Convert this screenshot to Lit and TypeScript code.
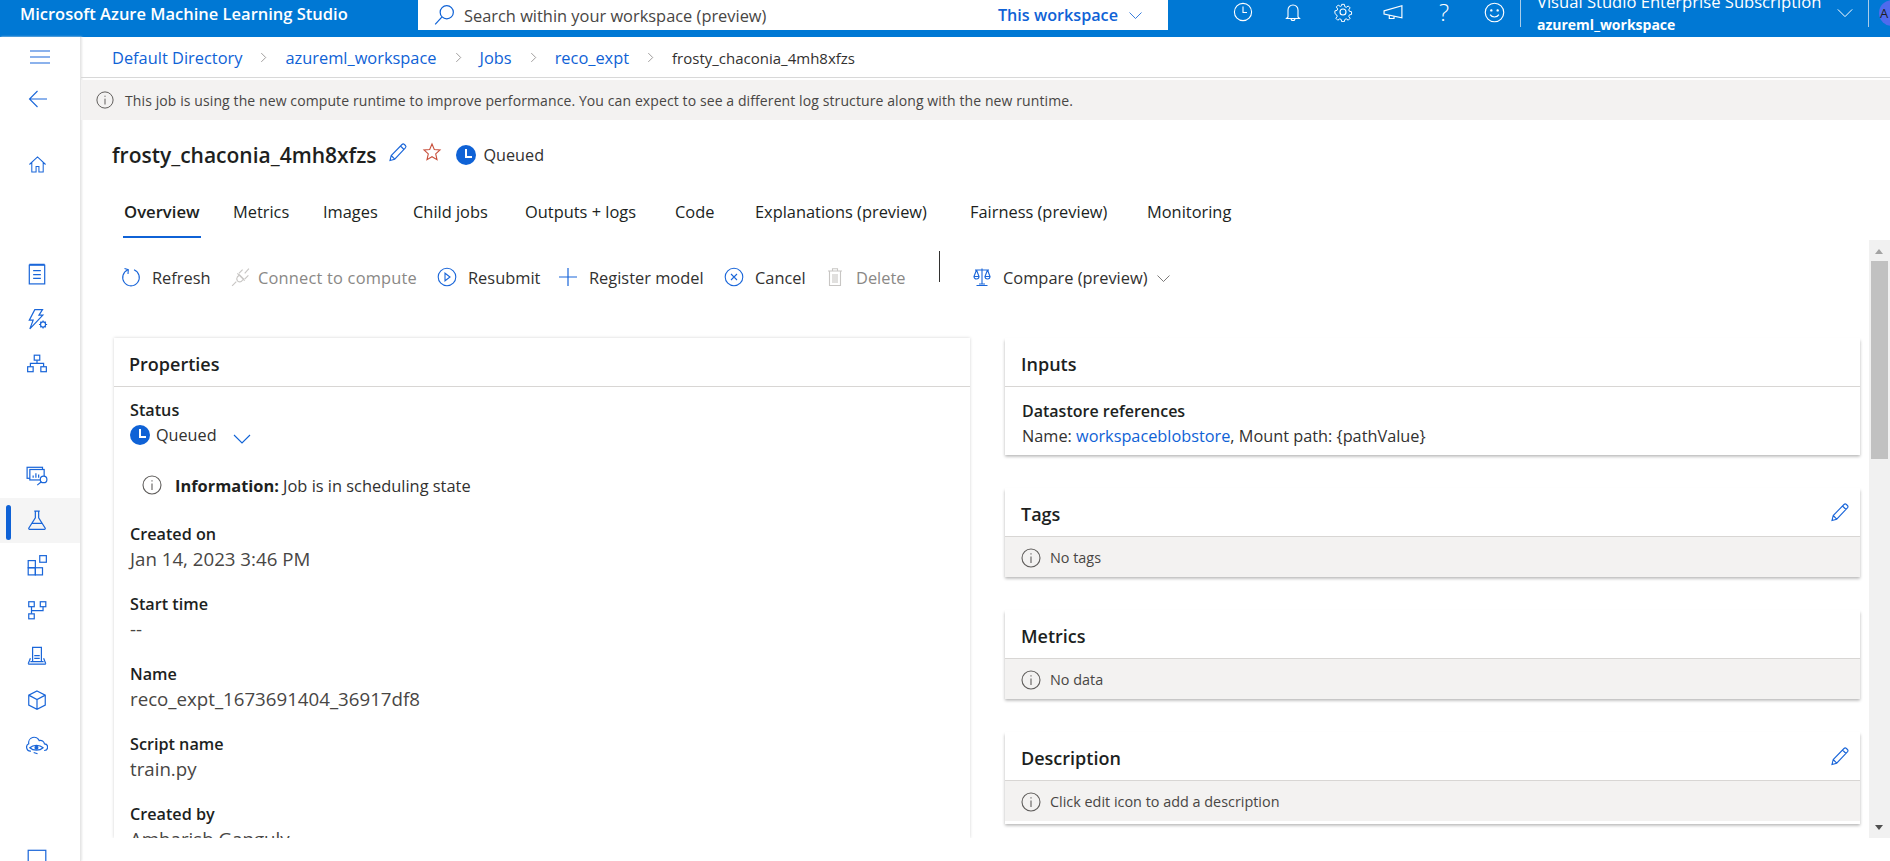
import { LitElement, html, css, svg } from "lit";
import { customElement } from "lit/decorators.js";

const ic = (w: number, body: unknown) => html`<svg class="ic" width=${w} height=${w} viewBox="0 0 20 20" fill="none" stroke="currentColor" stroke-width="1.1">${body}</svg>`;

const I = {
  search: svg`<circle cx="12.5" cy="7.5" r="6"/><path d="M8 12L2 18.5"/>`,
  clock: svg`<circle cx="10" cy="10" r="8.6"/><path d="M10 4.5V10.5H14"/>`,
  bell: svg`<path d="M5 15V8a5 5 0 0 1 10 0v7l1.5 1.5h-13z"/><path d="M8 16.5a2 2 0 0 0 4 0"/>`,
  gear: svg`<circle cx="10" cy="10" r="3"/><path d="M8.5 1.5h3l.5 2.6 1.6.7 2.2-1.5 2.1 2.1-1.5 2.2.7 1.6 2.4.5v3l-2.4.5-.7 1.6 1.5 2.2-2.1 2.1-2.2-1.5-1.6.7-.5 2.4h-3l-.5-2.4-1.6-.7-2.2 1.5-2.1-2.1 1.5-2.2-.7-1.6L1 11.7v-3l2.4-.5.7-1.6-1.5-2.2 2.1-2.1 2.2 1.5 1.6-.7z" transform="translate(1 1) scale(.9)"/>`,
  mega: svg`<path d="M1 8.5L18 3.5V15L1 11.5z"/><path d="M6 12.5v3.2h4.5v-2.2"/>`,
  smile: svg`<circle cx="10" cy="10" r="8.8"/><circle cx="7" cy="8" r=".6" fill="currentColor"/><circle cx="13" cy="8" r=".6" fill="currentColor"/><path d="M5.8 12a5 5 0 0 0 8.4 0"/>`,
  down: svg`<path d="M2 6l8 8 8-8"/>`,
  right: svg`<path d="M6 2l8 8-8 8"/>`,
  back: svg`<path d="M19 10H1.5M9.5 2L1.5 10l8 8"/>`,
  menu: svg`<path d="M0 4h20M0 10h20M0 16h20"/>`,
  home: svg`<path d="M1.5 10L10 2l8.5 8M4 8v10h4.5v-6h3v6H16V8"/>`,
  notebook: svg`<rect x="3" y="2" width="14" height="17"/><path d="M3 1.2h14M6.5 7h7M6.5 10.5h7M6.5 14h7"/>`,
  bolt: svg`<path d="M8 1.5h7l-3.2 5h3.5L3.5 19l3-8H3z"/><circle cx="15.5" cy="15" r="2.3" fill="#fff"/><path d="M15.5 11.3v1.4M15.5 17.3v1.4M11.8 15h1.4M17.8 15h1.4M13 12.5l1 1M17 16.5l1 1M18 12.5l-1 1M14 16.5l-1 1"/>`,
  org: svg`<rect x="7.5" y="2" width="5" height="4.5"/><rect x="1.5" y="12.5" width="5" height="4.5"/><rect x="13.5" y="12.5" width="5" height="4.5"/><path d="M10 6.5v3M4 12.5v-3h12v3"/>`,
  dataset: svg`<rect x="1" y="3" width="14" height="10"/><rect x="3.5" y="5" width="13" height="9.5" fill="#fff"/><path d="M6.5 12.5v-2M9 12.5v-4M11.5 12.5v-3"/><circle cx="16" cy="14" r="3" fill="#fff"/><path d="M14 16.2l-3.8 3"/>`,
  flask: svg`<path d="M7.5 2h5M8.5 2v6L2.5 17.5a.8.8 0 0 0 .7 1h13.6a.8.8 0 0 0 .7-1L11.5 8V2M5.5 13h9"/>`,
  grid: svg`<rect x="2" y="6" width="6.5" height="6.5"/><rect x="2" y="12.5" width="6.5" height="6.5"/><rect x="8.5" y="12.5" width="6.5" height="6.5"/><rect x="12.5" y="1.5" width="6" height="6"/>`,
  flow: svg`<rect x="2.5" y="2.5" width="5" height="4.5"/><rect x="13" y="2.5" width="5" height="4.5"/><rect x="2.5" y="13.5" width="5" height="4.5"/><path d="M5 7v6.5M5 10.5h10.5V7"/>`,
  compute: svg`<path d="M6 16V3h8v13M2 18l2-5M18 18l-2-5M2 18.3h16M7.5 10.5h5M7.5 13h5M4 16h12"/>`,
  cube: svg`<path d="M10 1.8l7.5 3.8v9L10 18.5 2.5 14.6V5.6zM2.5 5.6L10 9.5l7.5-3.9M10 9.5v9"/>`,
  cloud: svg`<path d="M4.5 15.5A3.5 3.5 0 0 1 2.500 8.900 5 5 0 0 1 12 6a3.800 3.800 0 0 1 4.800 3A3 3 0 0 1 16.500 15"/><path d="M3.500 12.500c3-3 9-3 12 0-3 3-9 3-12 0z" fill="#fff"/><circle cx="9.500" cy="12.500" r="1.300" fill="currentColor"/><path d="M7 16.800l3.500 1.200"/>`,
  screen: svg`<rect x="2" y="3" width="16" height="11.5"/><path d="M10 14.5V18M6.500 18h7"/>`,
  pencil: svg`<path d="M2 18.500l1.200-5L14 2.500a1.700 1.700 0 0 1 2.400 0l1 1a1.700 1.700 0 0 1 0 2.400L6.700 17.200z M12.500 4l3.500 3.500M3.200 13.500l3.500 3.700"/>`,
  star: svg`<path d="M10 2l2.300 5.500 5.700.5-4.300 3.900 1.300 5.800-5-3-5 3 1.300-5.800L2 8l5.700-.5z"/>`,
  refresh: svg`<path d="M7 2.800a8.300 8.300 0 1 0 6 0"/><path d="M3.500 1.500L7.300 2.700 7 7"/>`,
  plug: svg`<path d="M2 18l4-4M14 6l4-4.500M9 7.500l-2 2a3 3 0 0 0 0 3.500l.5.5a3 3 0 0 0 3.500 0l2-2zM7 6l7 7M12 2.500L8.500 6M17.500 8L14 11.500"/>`,
  play: svg`<circle cx="10" cy="10" r="8.800"/><path d="M8 6.200v7.600l5-3.800z"/>`,
  plus: svg`<path d="M10 1v18M1 10h18" stroke-width="1.200"/>`,
  cancel: svg`<circle cx="10" cy="10" r="8.800"/><path d="M7 7l6 6M13 7l-6 6"/>`,
  trash: svg`<path d="M3 4h14M7.500 4V1.800h5V4M4.500 4v14.500h11V4M8 7v9M10 7v9M12 7v9"/>`,
  scales: svg`<path d="M10 1.500V17M3 3h14M4.500 18.500h11M7 17h6M4.500 3L2 9.500M4.500 3L7 9.500M15.500 3L13 9.500M15.500 3L18 9.500M2 9.500a2.500 2.500 0 0 0 5 0zM13 9.500a2.500 2.500 0 0 0 5 0z"/>`,
  info: svg`<circle cx="10" cy="10" r="9"/><path d="M10 8.500V15M10 5.200v1.300"/>`,
};

const navA = [I.notebook, I.bolt, I.org];
const navB = [I.dataset, I.flask, I.grid, I.flow, I.compute, I.cube, I.cloud];

const tabs: [string, boolean?][] = [["Overview", true], ["Metrics"], ["Images"], ["Child jobs"], ["Outputs + logs"], ["Code"], ["Explanations (preview)"], ["Fairness (preview)"], ["Monitoring"]];

const props: [string, string][] = [
  ["Created on", "Jan 14, 2023 3:46 PM"],
  ["Start time", "--"],
  ["Name", "reco_expt_1673691404_36917df8"],
  ["Script name", "train.py"],
  ["Created by", "Ambarish Ganguly"],
];

@customElement("app-root")
export class AppRoot extends LitElement {
  static styles = css`
    :host { display: block; width: 1890px; height: 861px; overflow: hidden; background: #fff; font-family: "Open Sans", "Noto Sans", sans-serif; font-size: 14px; color: #323130; }
    * { box-sizing: border-box; }
    svg.ic { display: block; flex: none; }

    .header { height: 37px; background: #0078d4; color: #fff; display: flex; align-items: flex-start; overflow: hidden; }
    .brand { width: 418px; flex: none; padding-left: 20px; line-height: 28px; font-size: 16.5px; font-weight: 600; white-space: nowrap; }
    .search { width: 750px; flex: none; height: 30px; background: #fff; color: #484644; display: flex; align-items: center; padding: 0 16px 0 15px; font-size: 16.4px; }
    .search .ic { color: #0f62d6; }
    .search > .ic { margin-right: 9px; }
    .search .sp { flex: 1; }
    .search .scope { color: #0f62d6; margin-right: 10px; font-size: 16.2px; font-weight: 600; }
    .hicons { display: flex; flex: none; align-items: center; gap: 30px; margin-left: 65px; height: 24px; }
    .help { font-size: 24px; line-height: 24px; width: 20px; text-align: center; font-weight: 300; }
    .sub { margin-left: 15px; flex: none; border-left: 1px solid #a9cdea; height: 27px; width: 348px; position: relative; }
    .subtxt { position: absolute; left: 16px; top: -8px; white-space: nowrap; }
    .subtxt .l1 { font-size: 16.6px; line-height: 20px; }
    .subtxt .l2 { font-size: 14px; font-weight: 700; line-height: 16px; margin-top: 5px; }
    .sub .ic { position: absolute; left: 315px; top: 4px; }
    .avatar { flex: none; border-left: 1px solid #a9cdea; height: 27px; padding-left: 10px; }
    .avatar div { width: 26px; height: 26px; border-radius: 50%; background: #4f6bed; color: #201f1e; font-size: 13px; line-height: 26px; padding-left: 1px; }

    .body { display: flex; height: 824px; }
    .side { width: 81px; flex: none; overflow: hidden; border-right: 1px solid #e6e6e6; box-shadow: 1px 0 2px #e6e6e6; color: #1a66d9; display: flex; flex-direction: column; }
    .sitem { height: 45px; flex: none; display: flex; align-items: center; padding-left: 26px; }
    .sitem.t { height: 40px; padding-left: 28px; }
    .sitem.m { padding-left: 30px; }
    .sitem.active { background: #f5f5f5; position: relative; }
    .sitem.active::before { content: ""; position: absolute; left: 6px; top: 7px; bottom: 3px; width: 5px; border-radius: 3px; background: #0f62d6; }
    .gap0 { height: 2px; flex: none; }
    .gap1 { height: 25px; flex: none; }
    .gap2 { height: 67px; flex: none; }
    .gap3 { height: 66.5px; flex: none; }
    .gap4 { height: 68px; flex: none; }

    .main { flex: 1; min-width: 0; display: flex; flex-direction: column; height: 801px; position: relative; }
    .crumbs { height: 41px; border-bottom: 1px solid #d8d8d8; display: flex; align-items: center; padding: 1px 0 0 31px; font-size: 16.4px; color: #0f62d6; flex: none; white-space: nowrap; }
    .crumbs .ic { color: #605e5c; margin: 0 16px; }
    .crumbs .cur { color: #323130; font-size: 15px; }
    .banner { height: 40px; margin-top: 2px; background: #f3f2f1; display: flex; align-items: center; padding-left: 15px; font-size: 14px; color: #484644; letter-spacing: .1px; flex: none; white-space: nowrap; }
    .banner .ic { margin-right: 11px; color: #605e5c; }
    .title { height: 35px; margin-top: 17px; padding-left: 31px; display: flex; align-items: center; flex: none; }
    .title h1 { margin: 0; font-size: 21px; font-weight: 600; color: #201f1e; white-space: nowrap; }
    .title .pen { color: #1a66d9; margin-left: 11px; margin-top: -6px; }
    .title .star { color: #c8503c; margin-left: 14px; margin-top: -6px; }
    .badge { display: flex; align-items: center; gap: 8px; margin-left: 14px; font-size: 16.2px; }
    .dot { width: 20px; height: 20px; border-radius: 50%; background: #0f62d6; position: relative; flex: none; }
    .dot::after { content: ""; position: absolute; left: 9px; top: 4px; width: 5px; height: 7px; border-left: 2px solid #fff; border-bottom: 2px solid #fff; }

    .tabs { display: grid; grid-template-columns: 109px 90px 90px 112px 150px 80px 215px 177px auto; height: 52px; flex: none; margin-top: 14px; padding-left: 43px; font-size: 16.4px; color: #201f1e; }
    .tab { justify-self: start; height: 52px; line-height: 52px; white-space: nowrap; position: relative; }
    .tab.on { font-weight: 600; font-size: 16.7px; }
    .tab.on::after { content: ""; position: absolute; left: -1px; right: -1px; bottom: 0; height: 2px; background: #0f62d6; }

    .bar { height: 36px; flex: none; margin-top: 21px; padding-left: 40px; display: grid; grid-template-columns: 109px 207px 121px 166px 101px 114px 33px auto; align-items: center; font-size: 16.4px; color: #323130; }
    .tb { display: flex; align-items: center; gap: 11px; white-space: nowrap; }
    .tb .ic { color: #1a66d9; }
    .tb.dis { color: #8a8886; }
    .tb.dis .ic { color: #c8c6c4; }
    .tb.plug { gap: 7px; letter-spacing: .2px; }
    .tb .more { margin-left: -2px; margin-top: 2px; }
    .tb .more .ic { color: #605e5c; }
    .vr { width: 1px; height: 31px; background: #323130; align-self: start; margin-top: -8px; }

    .panes { flex: 1; min-height: 0; display: flex; overflow: hidden; margin-top: 40px; padding-top: 3px; }
    .left { width: 856px; margin-left: 33px; flex: none; background: #fff; box-shadow: 0 0 3px rgba(0,0,0,.18); overflow: hidden; }
    .right { width: 855px; margin-left: 35px; flex: none; display: flex; flex-direction: column; gap: 33px; }
    .card { background: #fff; box-shadow: 0 1.5px 3px rgba(0,0,0,.3); flex: none; }
    .ch { height: 49px; border-bottom: 1px solid #d8d6d4; display: flex; align-items: center; padding: 3px 10px 0 16px; font-size: 18px; font-weight: 600; color: #201f1e; justify-content: space-between; }
    .ch .ic { color: #1a66d9; margin-top: -4px; }
    .left .ch { padding-left: 15px; }
    .none { height: 40px; background: #f3f2f1; display: flex; align-items: center; padding: 1px 0 0 16px; gap: 9px; font-size: 14.4px; color: #484644; }
    .none .ic { color: #605e5c; }
    .tail { height: 3px; }
    .inp { padding: 12px 17px 10px; line-height: 25px; font-size: 16.3px; height: 68px; white-space: nowrap; }
    .inp b { display: block; font-weight: 600; color: #201f1e; font-size: 16px; }
    a { color: #0f62d6; text-decoration: none; }
    .props { padding: 11px 0 0 16px; font-size: 16.2px; }
    .lab { font-weight: 600; color: #201f1e; font-size: 16.2px; line-height: 24px; }
    .val { color: #484644; line-height: 25px; font-size: 18.7px; white-space: nowrap; }
    .p { height: 70px; }
    .status { display: flex; align-items: center; height: 26px; gap: 6px; }
    .status .ic { color: #0f62d6; margin: 8px 0 0 9px; }
    .msg { display: flex; align-items: center; gap: 13px; margin: 24px 0 0 12px; height: 26px; white-space: nowrap; font-size: 16.4px; }
    .msg .ic { color: #605e5c; }
    .msg b { font-weight: 700; color: #201f1e; }
    .spacer { height: 23.7px; }

    .scroll { position: absolute; left: 1788px; top: 203px; bottom: 0; width: 21px; background: #f1f1f1; }
    .thumb { position: absolute; left: 2px; right: 2px; top: 21px; height: 198px; background: #c1c1c1; }
    .arr { position: absolute; left: 6px; width: 0; height: 0; border-left: 4.5px solid transparent; border-right: 4.5px solid transparent; }
    .arr.u { top: 9px; border-bottom: 5px solid #a3a3a3; }
    .arr.d { bottom: 8px; border-top: 5px solid #505050; }
  `;

  render() {
    return html`
      <div class="header">
        <div class="brand">Microsoft Azure Machine Learning Studio</div>
        <div class="search">${ic(22, I.search)}<span>Search within your workspace (preview)</span><span class="sp"></span><span class="scope">This workspace</span>${ic(15, I.down)}</div>
        <div class="hicons">${ic(20, I.clock)}${ic(20, I.bell)}${ic(20, I.gear)}${ic(21, I.mega)}<span class="help">?</span>${ic(21, I.smile)}</div>
        <div class="sub"><div class="subtxt"><div class="l1">Visual Studio Enterprise Subscription</div><div class="l2">azureml_workspace</div></div>${ic(18, I.down)}</div>
        <div class="avatar"><div>A</div></div>
      </div>
      <div class="body">
        <nav class="side">
          <div class="sitem t m">${ic(20, I.menu)}</div>
          <div class="gap0"></div>
          <div class="sitem t">${ic(20, I.back)}</div>
          <div class="gap1"></div>
          <div class="sitem t">${ic(19, I.home)}</div>
          <div class="gap2"></div>
          ${navA.map((b) => html`<div class="sitem">${ic(22, b)}</div>`)}
          <div class="gap3"></div>
          ${navB.map((b, i) => html`<div class="sitem ${i === 1 ? "active" : ""}">${ic(22, b)}</div>`)}
          <div class="gap4"></div>
          <div class="sitem">${ic(22, I.screen)}</div>
        </nav>
        <div class="main">
          <div class="crumbs"><span>Default Directory</span>${ic(11, I.right)}<span>azureml_workspace</span>${ic(11, I.right)}<span>Jobs</span>${ic(11, I.right)}<span>reco_expt</span>${ic(11, I.right)}<span class="cur">frosty_chaconia_4mh8xfzs</span></div>
          <div class="banner">${ic(18, I.info)}<span>This job is using the new compute runtime to improve performance. You can expect to see a different log structure along with the new runtime.</span></div>
          <div class="title"><h1>frosty_chaconia_4mh8xfzs</h1><span class="pen">${ic(20, I.pencil)}</span><span class="star">${ic(20, I.star)}</span><div class="badge"><span class="dot"></span><span>Queued</span></div></div>
          <div class="tabs">${tabs.map(([t, on]) => html`<div class="tab ${on ? "on" : ""}">${t}</div>`)}</div>
          <div class="bar">
            <div class="tb">${ic(20, I.refresh)}Refresh</div>
            <div class="tb dis plug">${ic(21, I.plug)}Connect to compute</div>
            <div class="tb">${ic(20, I.play)}Resubmit</div>
            <div class="tb">${ic(20, I.plus)}Register model</div>
            <div class="tb">${ic(20, I.cancel)}Cancel</div>
            <div class="tb dis">${ic(20, I.trash)}Delete</div>
            <span class="vr"></span>
            <div class="tb">${ic(20, I.scales)}Compare (preview)<span class="more">${ic(15, I.down)}</span></div>
          </div>
          <div class="panes">
            <section class="left">
              <div class="ch">Properties</div>
              <div class="props">
                <div class="lab">Status</div>
                <div class="status"><span class="dot"></span><span>Queued</span>${ic(20, I.down)}</div>
                <div class="msg">${ic(20, I.info)}<span><b>Information:</b> Job is in scheduling state</span></div>
                <div class="spacer"></div>
                ${props.map(([k, v]) => html`<div class="p"><div class="lab">${k}</div><div class="val">${v}</div></div>`)}
              </div>
            </section>
            <div class="right">
              <section class="card"><div class="ch">Inputs</div><div class="inp"><b>Datastore references</b>Name: <a>workspaceblobstore</a>, Mount path: {pathValue}</div></section>
              <section class="card"><div class="ch">Tags${ic(20, I.pencil)}</div><div class="none">${ic(20, I.info)}No tags</div></section>
              <section class="card"><div class="ch">Metrics</div><div class="none">${ic(20, I.info)}No data</div></section>
              <section class="card"><div class="ch">Description${ic(20, I.pencil)}</div><div class="none">${ic(20, I.info)}Click edit icon to add a description</div><div class="tail"></div></section>
            </div>
          </div>
          <div class="scroll"><span class="arr u"></span><div class="thumb"></div><span class="arr d"></span></div>
        </div>
      </div>
    `;
  }
}
